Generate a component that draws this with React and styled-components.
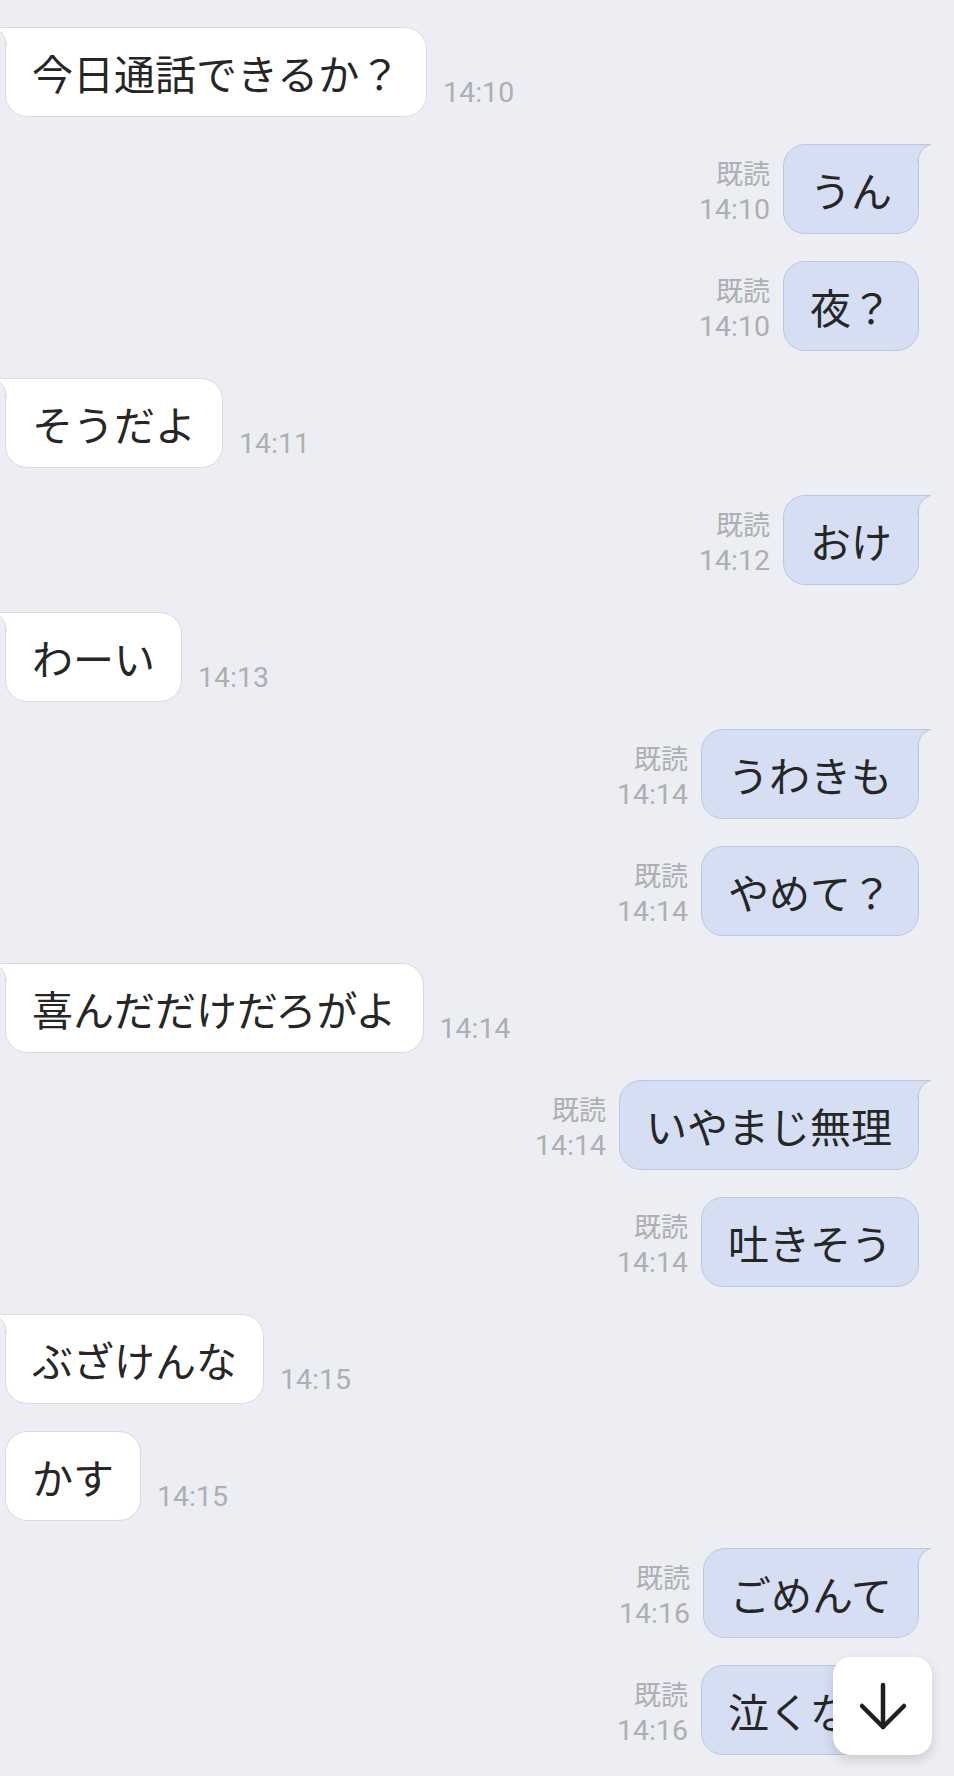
import React from "react";
import styled, { createGlobalStyle } from "styled-components";
import { ArrowDown } from "lucide-react";

const messages = [
  { id: 1, side: "left", text: "今日通話できるか？", time: "14:10", tail: true },
  { id: 2, side: "right", text: "うん", time: "14:10", tail: true },
  { id: 3, side: "right", text: "夜？", time: "14:10" },
  { id: 4, side: "left", text: "そうだよ", time: "14:11", tail: true },
  { id: 5, side: "right", text: "おけ", time: "14:12", tail: true },
  { id: 6, side: "left", text: "わーい", time: "14:13", tail: true },
  { id: 7, side: "right", text: "うわきも", time: "14:14", tail: true },
  { id: 8, side: "right", text: "やめて？", time: "14:14" },
  { id: 9, side: "left", text: "喜んだだけだろがよ", time: "14:14", tail: true },
  { id: 10, side: "right", text: "いやまじ無理", time: "14:14", tail: true },
  { id: 11, side: "right", text: "吐きそう", time: "14:14" },
  { id: 12, side: "left", text: "ぶざけんな", time: "14:15", tail: true },
  { id: 13, side: "left", text: "かす", time: "14:15" },
  { id: 14, side: "right", text: "ごめんて", time: "14:16", tail: true },
  { id: 15, side: "right", text: "泣くなよ", time: "14:16" },
];

const colors = {
  left: { bg: "#ffffff", border: "#d9dbe0" },
  right: { bg: "#d5def3", border: "#bcc7df" },
};

const GlobalStyle = createGlobalStyle`
  html, body {
    margin: 0;
    padding: 0;
    background: #eceef3;
  }
  body {
    font-family: Roboto, "Noto Sans CJK JP", sans-serif;
  }
`;

const Page = styled.div`
  position: relative;
  width: 954px;
  height: 1791px;
  display: flex;
  flex-direction: column;
  overflow: hidden;
`;

const ChatList = styled.div`
  height: 1776px;
  box-sizing: border-box;
  padding: 27px 35px 0 5px;
  background: #eceef3;
  display: flex;
  flex-direction: column;
  gap: 27px;
`;

const Footer = styled.div`
  flex: 1;
  background: #ffffff;
`;

const Row = styled.div`
  display: flex;
  align-items: flex-end;
  justify-content: ${(p) => (p.$side === "right" ? "flex-end" : "flex-start")};
  gap: ${(p) => (p.$side === "right" ? "13px" : "16px")};
`;

const Bubble = styled.div`
  position: relative;
  box-sizing: border-box;
  height: 90px;
  padding: 16px 26px;
  font-family: "Noto Sans CJK JP", sans-serif;
  font-size: 41px;
  line-height: 56px;
  color: #262626;
  white-space: nowrap;
  background: ${(p) => colors[p.$side].bg};
  border: 1px solid ${(p) => colors[p.$side].border};
  border-radius: 22px;
  ${(p) =>
    p.$tail
      ? p.$side === "right"
        ? "border-top-right-radius: 0;"
        : "border-top-left-radius: 0;"
      : ""}
`;

const TailSvg = styled.svg`
  position: absolute;
  top: -1px;
  width: 14px;
  height: 20px;
  overflow: visible;
  ${(p) =>
    p.$side === "right"
      ? "right: -13px;"
      : "left: -13px; transform: scaleX(-1);"}
`;

const Meta = styled.div`
  display: flex;
  flex-direction: column;
  align-items: ${(p) => (p.$side === "right" ? "flex-end" : "flex-start")};
  margin-bottom: 6px;
  color: #adafb4;
  font-size: 28.5px;
  line-height: 37px;
`;

const Read = styled.span`
  font-family: "Noto Sans CJK JP", sans-serif;
  font-size: 27px;
`;

const Time = styled.span`
  font-family: Roboto, sans-serif;
`;

const ScrollButton = styled.button`
  position: absolute;
  right: 22px;
  bottom: 36px;
  width: 99px;
  height: 98px;
  border: none;
  border-radius: 18px;
  background: #ffffff;
  box-shadow: 0 5px 12px rgba(0, 0, 0, 0.14);
  display: flex;
  align-items: center;
  justify-content: center;
  padding: 0;
  color: #1f1f1f;
`;

const Tail = ({ side }) => {
  const c = colors[side];
  return (
    <TailSvg $side={side} viewBox="0 0 14 20">
      <path d="M0 0.5 H13.5 C7 2.5 1.5 8 0.5 19.5 H0 Z" fill={c.bg} />
      <path
        d="M0 0.5 H13.5 C7 2.5 1.5 8 0.5 19.5"
        fill="none"
        stroke={c.border}
        strokeWidth="1"
      />
    </TailSvg>
  );
};

const Message = ({ msg }) => {
  const bubble = (
    <Bubble $side={msg.side} $tail={msg.tail}>
      {msg.text}
      {msg.tail && <Tail side={msg.side} />}
    </Bubble>
  );

  if (msg.side === "right") {
    return (
      <Row $side="right">
        <Meta $side="right">
          <Read>既読</Read>
          <Time>{msg.time}</Time>
        </Meta>
        {bubble}
      </Row>
    );
  }

  return (
    <Row $side="left">
      {bubble}
      <Meta $side="left">
        <Time>{msg.time}</Time>
      </Meta>
    </Row>
  );
};

export default function App() {
  return (
    <>
      <GlobalStyle />
      <Page>
        <ChatList>
          {messages.map((m) => (
            <Message key={m.id} msg={m} />
          ))}
        </ChatList>
        <Footer />
        <ScrollButton>
          <ArrowDown size={72} strokeWidth={1.5} />
        </ScrollButton>
      </Page>
    </>
  );
}
